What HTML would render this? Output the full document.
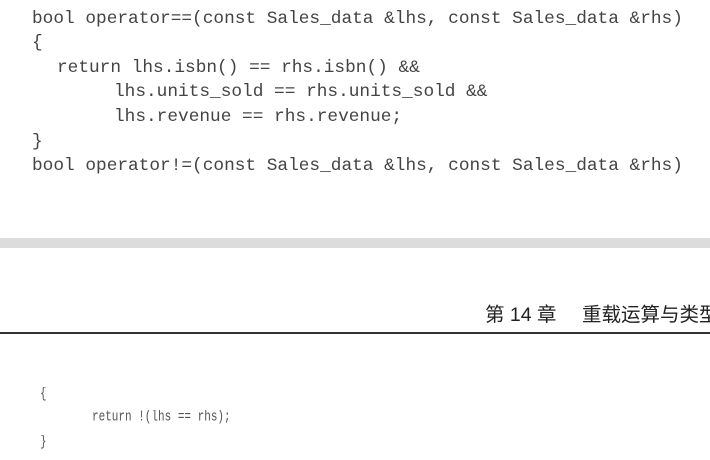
<!DOCTYPE html>
<html><head><meta charset="utf-8"><style>
html,body{margin:0;padding:0;background:#fff;width:710px;height:460px;overflow:hidden;position:relative}
.c{position:absolute;font-family:"Liberation Mono",monospace;color:#444;white-space:pre;font-size:17.8px;line-height:18px}
.s{position:absolute;font-family:"Liberation Mono",monospace;color:#555;white-space:pre;font-size:11px;line-height:14px;transform:scaleY(1.3);transform-origin:left top}
.band{position:absolute;left:0;top:238px;width:710px;height:10px;background:#dcdcdc}
.hd{position:absolute;top:304px;font-family:"Liberation Sans","Noto Sans CJK SC",sans-serif;font-size:19.5px;line-height:22px;color:#222;white-space:nowrap}
.rule{position:absolute;left:0;top:332px;width:710px;height:2px;background:#333}
</style></head><body>
<div class="c" style="left:32px;top:10px">bool operator==(const Sales_data &amp;lhs, const Sales_data &amp;rhs)</div>
<div class="c" style="left:32px;top:34px">{</div>
<div class="c" style="left:57px;top:59px">return lhs.isbn() == rhs.isbn() &amp;&amp;</div>
<div class="c" style="left:114px;top:83px">lhs.units_sold == rhs.units_sold &amp;&amp;</div>
<div class="c" style="left:114px;top:108px">lhs.revenue == rhs.revenue;</div>
<div class="c" style="left:32px;top:133px">}</div>
<div class="c" style="left:32px;top:157px">bool operator!=(const Sales_data &amp;lhs, const Sales_data &amp;rhs)</div>
<div class="band"></div>
<div class="hd" style="left:485px">第 14 章</div>
<div class="hd" style="left:582px">重载运算与类型</div>
<div class="rule"></div>
<div class="s" style="left:40px;top:386px">{</div>
<div class="s" style="left:92px;top:409px">return !(lhs == rhs);</div>
<div class="s" style="left:40px;top:434px">}</div>
</body></html>
